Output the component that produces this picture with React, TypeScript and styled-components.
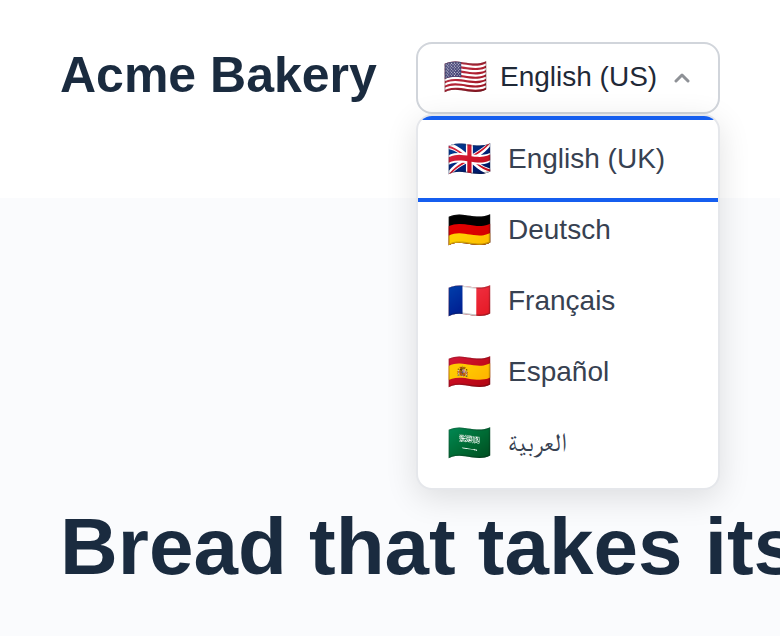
import { useState } from "react";
import styled, { createGlobalStyle } from "styled-components";

const GlobalStyle = createGlobalStyle`
  *, *::before, *::after { box-sizing: border-box; }
  body {
    margin: 0;
    background: #fafbfd;
    color: #1a2b3f;
    font-family: "Liberation Sans", Arial, sans-serif;
    overflow-x: hidden;
  }
`;

const Header = styled.header`
  display: flex;
  align-items: flex-start;
  justify-content: space-between;
  gap: 24px;
  padding: 42px 60px 84px;
  background: #ffffff;
`;

const Brand = styled.a`
  color: #1a2b3f;
  font-size: 50px;
  font-weight: 700;
  line-height: 66px;
  text-decoration: none;
  white-space: nowrap;
`;

const Picker = styled.div`
  position: relative;
  flex: 0 0 304px;
`;

const Trigger = styled.button`
  display: flex;
  align-items: center;
  width: 100%;
  height: 72px;
  padding: 0 28px 2px 25px;
  border: 2px solid #d1d5db;
  border-radius: 16px;
  background: #ffffff;
  color: #1f2937;
  font: inherit;
  font-size: 28px;
  line-height: 36px;
  cursor: pointer;
`;

const Flag = styled.span`
  flex: none;
  width: 45px;
  font-family: "Noto Color Emoji", sans-serif;
  font-size: 36px;
  line-height: 46px;
`;

const TriggerLabel = styled.span`
  flex: 1;
  margin-left: 12px;
  text-align: left;
  white-space: nowrap;
`;

const Chevron = styled.svg<{ $open: boolean }>`
  flex: none;
  width: 16px;
  height: 12px;
  transform: ${({ $open }) => ($open ? "none" : "rotate(180deg)")};
`;

const Menu = styled.ul`
  position: absolute;
  z-index: 1;
  top: 100%;
  left: 0;
  right: 0;
  display: flex;
  flex-direction: column;
  gap: 1px;
  margin: 0;
  padding: 8px 0 10px;
  overflow: hidden;
  list-style: none;
  background: #ffffff;
  border: 2px solid #e5e7eb;
  border-radius: 16px;
  box-shadow: 0 8px 32px rgba(0, 0, 0, 0.12);
`;

const Option = styled.button<{ $focused: boolean }>`
  display: flex;
  align-items: center;
  gap: 16px;
  width: 100%;
  height: 70px;
  padding: 0 29px;
  border: 0;
  background: transparent;
  color: #374151;
  font: inherit;
  font-size: 28px;
  line-height: 36px;
  cursor: pointer;
  outline: ${({ $focused }) => ($focused ? "4px solid #155eef" : "none")};
  outline-offset: 4px;
`;

const OptionLabel = styled.span`
  &:lang(ar) {
    font-family: FreeSerif, "DejaVu Sans", sans-serif;
    font-size: 26px;
  }
`;

const Hero = styled.main`
  padding: 300px 60px 40px;
`;

const Headline = styled.h1`
  margin: 0;
  font-size: 80px;
  font-weight: 700;
  line-height: 98px;
  white-space: nowrap;
`;

const languages = [
  { code: "en-US", flag: "🇺🇸", label: "English (US)" },
  { code: "en-GB", flag: "🇬🇧", label: "English (UK)" },
  { code: "de", flag: "🇩🇪", label: "Deutsch" },
  { code: "fr", flag: "🇫🇷", label: "Français" },
  { code: "es", flag: "🇪🇸", label: "Español" },
  { code: "ar", flag: "🇸🇦", label: "العربية" },
];

export default function App() {
  const [open, setOpen] = useState(true);
  const [selected, setSelected] = useState("en-US");
  const [focused, setFocused] = useState("en-GB");
  const current = languages.find(({ code }) => code === selected)!;

  return (
    <>
      <GlobalStyle />
      <Header>
        <Brand href="#">Acme Bakery</Brand>
        <Picker>
          <Trigger
            type="button"
            aria-expanded={open}
            aria-controls="language-menu"
            onClick={() => setOpen(!open)}
          >
            <Flag aria-hidden="true">{current.flag}</Flag>
            <TriggerLabel>{current.label}</TriggerLabel>
            <Chevron $open={open} viewBox="0 0 16 12" aria-hidden="true">
              <path
                d="M2 10 8 4l6 6"
                fill="none"
                stroke="#8e9196"
                strokeWidth="3"
                strokeLinecap="round"
                strokeLinejoin="round"
              />
            </Chevron>
          </Trigger>
          {open && (
            <Menu id="language-menu">
              {languages
                .filter(({ code }) => code !== selected)
                .map(({ code, flag, label }) => (
                  <li key={code}>
                    <Option
                      type="button"
                      $focused={code === focused}
                      onFocus={() => setFocused(code)}
                      onClick={() => {
                        setSelected(code);
                        setOpen(false);
                      }}
                    >
                      <Flag aria-hidden="true">{flag}</Flag>
                      <OptionLabel lang={code}>{label}</OptionLabel>
                    </Option>
                  </li>
                ))}
            </Menu>
          )}
        </Picker>
      </Header>
      <Hero>
        <Headline>Bread that takes its time</Headline>
      </Hero>
    </>
  );
}
